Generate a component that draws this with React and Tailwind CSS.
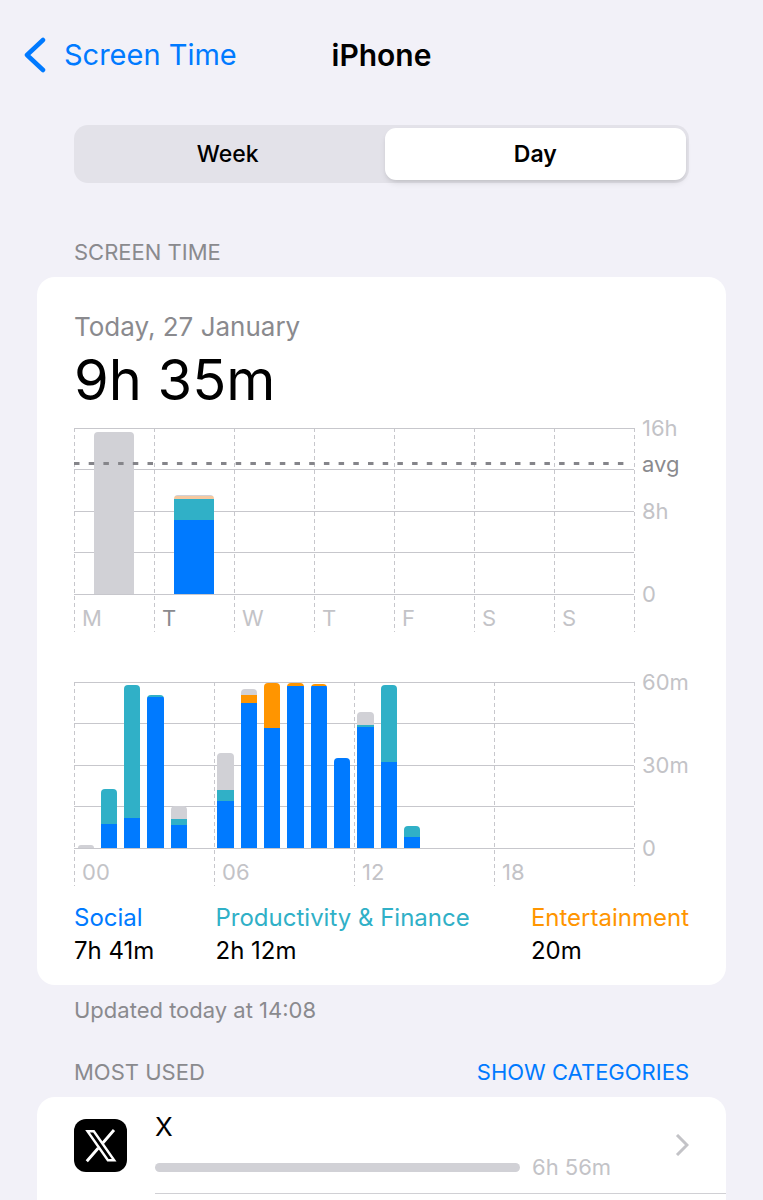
const COLORS = {
  social: 'bg-[#007aff]',
  productivity: 'bg-[#30b0c7]',
  entertainment: 'bg-[#ff9500]',
  entertainmentSoft: 'bg-[#f5c9a0]',
  other: 'bg-[#d1d1d6]',
}

// segments run from the top of the bar to the bottom, heights in px of a 166px plot
const WEEK = [
  { label: 'M', segments: [['other', 162]] },
  { label: 'T', current: true, segments: [['other', 1], ['entertainmentSoft', 3], ['productivity', 21], ['social', 74]] },
  { label: 'W', segments: [] },
  { label: 'T', segments: [] },
  { label: 'F', segments: [] },
  { label: 'S', segments: [] },
  { label: 'S', segments: [] },
]

const HOURS = [
  [['other', 3]],
  [['productivity', 35], ['social', 24]],
  [['productivity', 133], ['social', 30]],
  [['productivity', 2], ['social', 151]],
  [['other', 13], ['productivity', 6], ['social', 23]],
  [],
  [['other', 37], ['productivity', 11], ['social', 47]],
  [['other', 6], ['entertainment', 8], ['social', 145]],
  [['entertainment', 45], ['social', 120]],
  [['entertainment', 3], ['social', 162]],
  [['entertainment', 2], ['social', 162]],
  [['social', 90]],
  [['other', 13], ['productivity', 2], ['social', 121]],
  [['productivity', 77], ['social', 86]],
  [['productivity', 11], ['social', 11]],
  [], [], [], [], [], [], [], [], [],
]

const LEGEND = [
  { name: 'Social', time: '7h 41m', color: 'text-[#007aff]' },
  { name: 'Productivity & Finance', time: '2h 12m', color: 'text-[#30b0c7]' },
  { name: 'Entertainment', time: '20m', color: 'text-[#ff9500]' },
]

function Bar({ segments, className }) {
  return (
    <div className={`flex flex-col overflow-hidden rounded-t ${className}`}>
      {segments.map(([kind, height]) => (
        <div key={kind} className={`shrink-0 ${COLORS[kind]}`} style={{ height }} />
      ))}
    </div>
  )
}

function Grid({ columns }) {
  const rows = [0, 1, 2, 3, 4]
  const cols = Array.from({ length: columns + 1 }, (_, i) => i)
  return (
    <svg className="absolute inset-0 h-full w-full overflow-visible" shapeRendering="crispEdges" aria-hidden="true">
      {rows.map((i) => (
        <line key={i} x1="0" x2="100%" y1={i * 41.5} y2={i * 41.5} stroke="#c7c7cc" />
      ))}
      {cols.map((i) => (
        <line
          key={i}
          x1={`${(i * 100) / columns}%`}
          x2={`${(i * 100) / columns}%`}
          y1="0"
          y2="100%"
          stroke="#c7c7cc"
          strokeDasharray="4 3"
        />
      ))}
    </svg>
  )
}

function Chart({ columns, ticks, bars, labels, avg }) {
  return (
    <div className="flex">
      <div className="relative flex-1">
        <Grid columns={columns} />
        <div className="relative flex h-[166px] items-end">{bars}</div>
        {avg && (
          <svg className="absolute inset-0 h-full w-full" aria-hidden="true">
            <line x1="0" x2="99%" y1="35.500" y2="35.500" stroke="#85858a" strokeWidth="3" strokeDasharray="5.5 9.2" />
          </svg>
        )}
        <div className="relative flex pt-3 pb-0.5 text-[22px] leading-6 text-[#c3c3c7]">{labels}</div>
      </div>
      <div className="relative -mt-3 flex h-[190px] w-[55px] flex-col justify-between pl-2 text-[22px] leading-6 text-[#c3c3c7]">
        {ticks.map((tick) => (
          <span key={tick}>{tick}</span>
        ))}
        {avg && <span className="absolute top-9 text-[#8a8a8e]">avg</span>}
      </div>
    </div>
  )
}

function XLogo() {
  return (
    <svg viewBox="0 0 53 53" className="size-[53px] shrink-0" aria-hidden="true">
      <rect width="53" height="53" rx="12" fill="#000" />
      <g fill="none" stroke="#fff">
        <path d="M13.500 12.200h6.300l20.400 29h-6.300z" strokeWidth="2.400" />
        <path d="M40 11 28.800 24M24.300 29 12.800 42.300" strokeWidth="2.900" />
      </g>
    </svg>
  )
}

export default function App() {
  return (
    <div className="flex min-h-screen flex-col bg-[#f2f1f8] px-[37px] font-['Inter',sans-serif] text-black">
      <header className="-mx-[37px] grid h-[109px] grid-cols-[1fr_auto_1fr] items-center px-6 leading-9">
        <a href="#screen-time" className="flex items-center gap-[18px] text-[29px] text-[#007aff]">
          <svg viewBox="0 0 22 36" className="h-9 w-[22px]" fill="none" stroke="currentColor" strokeWidth="4.500" strokeLinecap="round" strokeLinejoin="round" aria-hidden="true">
            <path d="M19 3 3 18l16 15" />
          </svg>
          Screen Time
        </a>
        <h1 className="text-[30px] font-semibold">iPhone</h1>
      </header>

      <div className="mx-[37px] mt-4 flex h-[58px] gap-1.5 rounded-[14px] bg-[#e3e2e9] p-[3px] text-[23px]">
        <button type="button" className="flex-1 rounded-[11px] font-medium">Week</button>
        <button type="button" aria-pressed="true" className="flex-1 rounded-[11px] bg-white font-semibold shadow-md">Day</button>
      </div>

      <h2 className="mx-[37px] mt-[55px] text-[22px] leading-7 text-[#8a8a8e]">SCREEN TIME</h2>
      <section className="mt-[11px] rounded-[18px] bg-white px-[37px] pt-8 pb-[18px]">
        <p className="text-[26px] leading-9 text-[#8a8a8e]">Today, 27 January</p>
        <p className="text-[56px] leading-[70px]">9h 35m</p>

        <div className="mt-[13px]">
          <Chart
            columns={7}
            ticks={['16h', '8h', '0']}
            avg
            bars={WEEK.map((day, i) => (
              <div key={i} className="flex flex-1 justify-center">
                <Bar segments={day.segments} className="w-1/2" />
              </div>
            ))}
            labels={WEEK.map((day, i) => (
              <span key={i} className={`flex-1 pl-2 ${day.current ? 'text-[#8a8a8e]' : ''}`}>
                {day.label}
              </span>
            ))}
          />
        </div>

        <div className="mt-[50px]">
          <Chart
            columns={4}
            ticks={['60m', '30m', '0']}
            bars={HOURS.map((segments, i) => (
              <div key={i} className="flex flex-1 justify-center">
                <Bar segments={segments} className="w-[70%]" />
              </div>
            ))}
            labels={['00', '06', '12', '18'].map((hour) => (
              <span key={hour} className="flex-1 pl-2">{hour}</span>
            ))}
          />
        </div>

        <dl className="mt-[15px] flex justify-between text-2xl leading-[33px]">
          {LEGEND.map((item) => (
            <div key={item.name}>
              <dt className={item.color}>{item.name}</dt>
              <dd>{item.time}</dd>
            </div>
          ))}
        </dl>
      </section>
      <p className="mx-[37px] mt-[11px] text-[22px] leading-7 text-[#8a8a8e]">Updated today at 14:08</p>

      <div className="mx-[37px] mt-[34px] flex justify-between text-[22px] leading-7">
        <h2 className="text-[#8a8a8e]">MOST USED</h2>
        <button type="button" className="text-[#007aff]">SHOW CATEGORIES</button>
      </div>
      <section className="mt-[11px] flex-1 rounded-t-[18px] bg-white pl-[37px]">
        <a href="#x" className="flex items-center gap-7">
          <XLogo />
          <div className="flex flex-1 items-center border-b border-[#d0d0d4] pr-[37px]">
            <div className="flex-1 pt-3 pb-2.5">
              <p className="text-[26px] leading-9">X</p>
              <div className="mt-1.5 flex items-center gap-3 text-[22px] leading-8 text-[#c3c3c7]">
                <div className="h-[9px] w-3/4 max-w-[365px] rounded-full bg-[#d1d1d6]" />
                6h 56m
              </div>
            </div>
            <svg viewBox="0 0 14 22" className="h-[22px] w-[14px]" fill="none" stroke="#c3c3c7" strokeWidth="3" aria-hidden="true">
              <path d="m2 1 10 10L2 21" />
            </svg>
          </div>
        </a>
      </section>
    </div>
  )
}
